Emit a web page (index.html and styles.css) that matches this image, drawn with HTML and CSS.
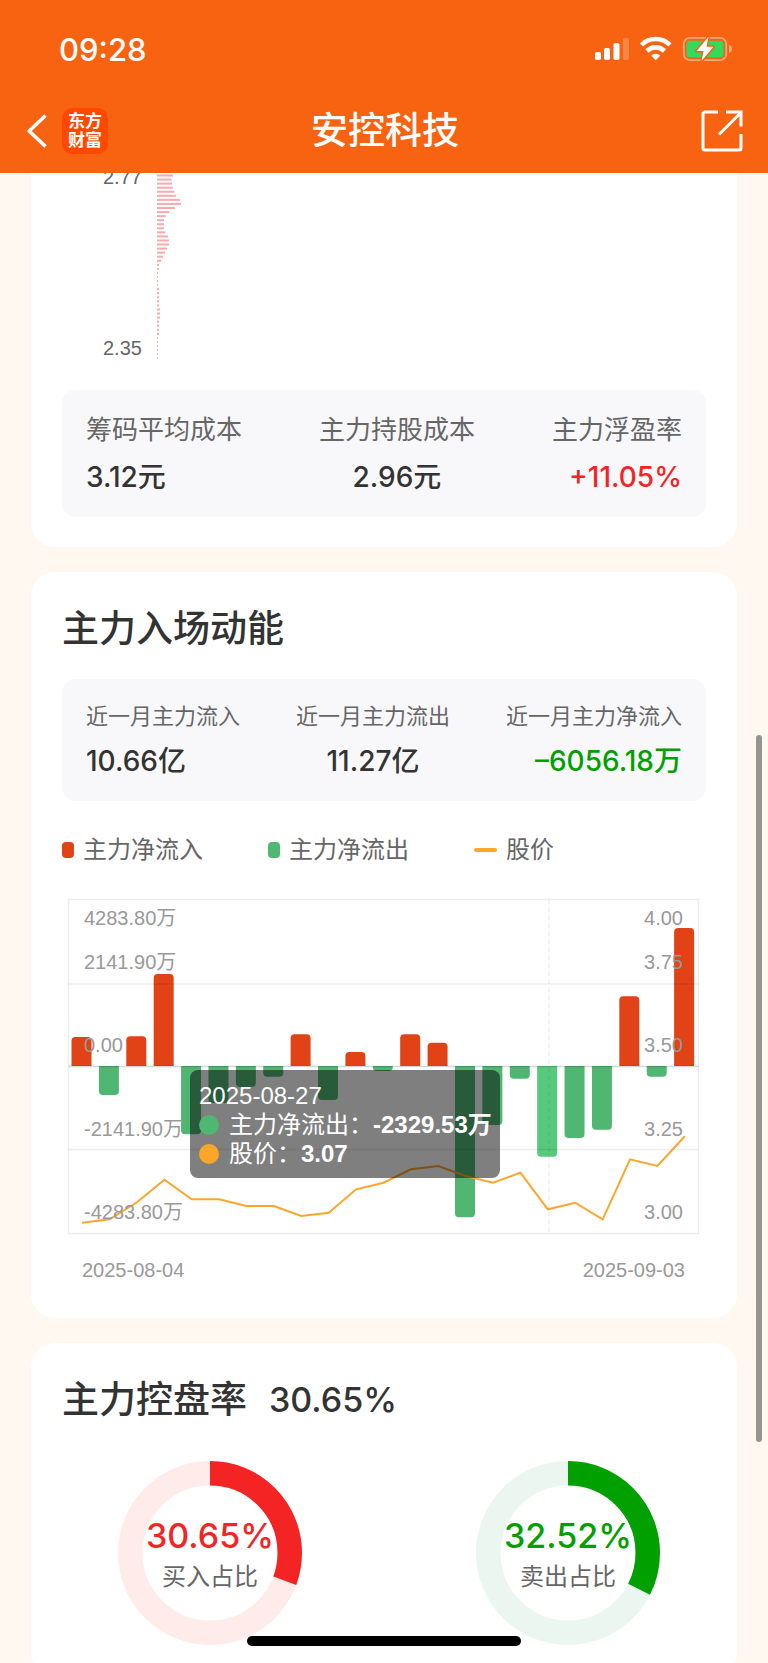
FILE: index.html
```html
<!DOCTYPE html>
<html lang="zh-CN">
<head>
    <meta charset="UTF-8">
    <meta name="viewport" content="width=device-width, initial-scale=1.0">
    <title>安控科技</title>
    <link rel="stylesheet" href="styles.css">
</head>
<body>
    <header class="header">
        <div class="status-bar">
            <span class="time">09:28</span>
            <svg class="status-icons" width="137" height="26" viewBox="0 0 137 26">
                <!-- signal -->
                <g fill="#fff">
                    <rect x="0" y="16" width="6" height="8" rx="1.8"/>
                    <rect x="9" y="12" width="6" height="12" rx="1.8"/>
                    <rect x="18.5" y="7" width="6" height="17" rx="1.8"/>
                    <rect x="28" y="2" width="6" height="22" rx="1.8" opacity="0.22"/>
                </g>
                <!-- wifi -->
                <g fill="none" stroke="#fff" stroke-width="4.6">
                    <path d="M46.4 8.800A20.500 20.500 0 0 1 75 8.800"/>
                    <path d="M51.900 15A12.600 12.600 0 0 1 69.500 15"/>
                </g>
                <path d="M60.700 24.200L56 19.600A6.600 6.600 0 0 1 65.400 19.600Z" fill="#fff"/>
                <!-- battery -->
                <rect x="88.8" y="1.8" width="42.4" height="22.4" rx="6" fill="none" stroke="#fff" stroke-opacity="0.45" stroke-width="1.8"/>
                <path d="M134 9v8c2-.6 3-2.2 3-4s-1-3.4-3-4z" fill="#fff" fill-opacity="0.45"/>
                <rect x="91.5" y="4.8" width="37" height="16.4" rx="3.4" fill="#31dc5b"/>
                <path d="M113.500 0.800L101.600 15H108.600L106.500 25L118.600 10.800H111.600Z" fill="#fff" stroke="#f86311" stroke-width="3" paint-order="stroke" stroke-linejoin="round"/>
            </svg>
        </div>
        <nav class="nav-bar">
            <div class="nav-left">
                <button class="icon-button" aria-label="返回">
                    <svg width="20" height="34" viewBox="0 0 20 34"><path d="M18.500 1.500L2.200 17L18.500 32.500" fill="none" stroke="#fff" stroke-width="3.6" stroke-linejoin="round"/></svg>
                </button>
                <span class="logo">东方<br>财富</span>
            </div>
            <h1 class="nav-title">安控科技</h1>
            <button class="icon-button nav-right" aria-label="分享">
                <svg width="42" height="42" viewBox="0 0 42 42" fill="none" stroke="#fff" stroke-width="3">
                    <path d="M17 2H4Q2 2 2 4V38Q2 40 4 40H38Q40 40 40 38V24"/>
                    <path d="M25 2H40V16.500M39.500 3L18 24.500"/>
                </svg>
            </button>
        </nav>
    </header>

    <main class="content">
        <section class="card card-first">
            <svg class="chip-chart" id="chip-chart" viewBox="0 0 644 217">
                <text x="41" y="11">2.77</text>
                <text x="41" y="182">2.35</text>
            </svg>
            <dl class="stats stats-large">
                <div class="stat"><dt>筹码平均成本</dt><dd>3.12元</dd></div>
                <div class="stat"><dt>主力持股成本</dt><dd>2.96元</dd></div>
                <div class="stat"><dt>主力浮盈率</dt><dd class="up">+11.05%</dd></div>
            </dl>
        </section>

        <section class="card">
            <h2 class="card-title">主力入场动能</h2>
            <dl class="stats">
                <div class="stat"><dt>近一月主力流入</dt><dd>10.66亿</dd></div>
                <div class="stat"><dt>近一月主力流出</dt><dd>11.27亿</dd></div>
                <div class="stat"><dt>近一月主力净流入</dt><dd class="down">–6056.18万</dd></div>
            </dl>
            <ul class="legend">
                <li><i class="mark mark-in"></i>主力净流入</li>
                <li><i class="mark mark-out"></i>主力净流出</li>
                <li><i class="mark mark-line"></i>股价</li>
            </ul>
            <div class="flow">
                <svg class="flow-chart" viewBox="0 0 644 396">
                    <g id="flow-bars"></g>
                    <g class="grid">
                        <rect x="6.5" y="9.5" width="630" height="334"/>
                        <path d="M6.500 94H636.500M6.500 259.500H636.500"/>
                        <path class="zero" d="M6.500 176.500H636.500"/>
                        <path class="pointer" d="M487 10V343"/>
                    </g>
                    <polyline id="price-line"/>
                    <g class="axis">
                        <text x="22" y="35">4283.80万</text>
                        <text x="22" y="79">2141.90万</text>
                        <text x="22" y="162">0.00</text>
                        <text x="22" y="246">-2141.90万</text>
                        <text x="22" y="329">-4283.80万</text>
                        <text x="20" y="387">2025-08-04</text>
                    </g>
                    <g class="axis axis-right">
                        <text x="621" y="35">4.00</text>
                        <text x="621" y="79">3.75</text>
                        <text x="621" y="162">3.50</text>
                        <text x="621" y="246">3.25</text>
                        <text x="621" y="329">3.00</text>
                        <text x="623" y="387">2025-09-03</text>
                    </g>
                </svg>
                <div class="tooltip">
                    <div class="tooltip-row">2025-08-27</div>
                    <div class="tooltip-row"><i class="dot dot-out"></i>主力净流出：<b>-2329.53万</b></div>
                    <div class="tooltip-row"><i class="dot dot-price"></i>股价：<b>3.07</b></div>
                </div>
            </div>
        </section>

        <section class="card">
            <h2 class="card-title">主力控盘率<span class="rate">30.65%</span></h2>
            <div class="donuts">
                <div class="donut donut-buy">
                    <svg viewBox="0 0 184 184">
                        <circle class="track" cx="92" cy="92" r="79.75"/>
                        <circle class="value" cx="92" cy="92" r="79.75" pathLength="100" stroke-dasharray="30.65 100"/>
                    </svg>
                    <div class="donut-text"><strong>30.65%</strong><span>买入占比</span></div>
                </div>
                <div class="donut donut-sell">
                    <svg viewBox="0 0 184 184">
                        <circle class="track" cx="92" cy="92" r="79.75"/>
                        <circle class="value" cx="92" cy="92" r="79.75" pathLength="100" stroke-dasharray="32.52 100"/>
                    </svg>
                    <div class="donut-text"><strong>32.52%</strong><span>卖出占比</span></div>
                </div>
            </div>
        </section>
    </main>

    <div class="scrollbar"></div>
    <div class="home-indicator"></div>

    <script src="script.js"></script>
</body>
</html>
```

FILE: styles.css
```css
* {
    box-sizing: border-box;
    margin: 0;
    padding: 0;
}
body {
    height: 100vh;
    display: flex;
    flex-direction: column;
    overflow: hidden;
    background-color: #fff8f1;
    color: #333;
    font-family: Inter, "Noto Sans CJK SC", sans-serif;
}

/* header */
.header {
    flex: none;
    background-color: #f86311;
    color: #fff;
}
.status-bar {
    height: 88px;
    padding: 10px 36px 0 59px;
    display: flex;
    align-items: center;
    justify-content: space-between;
}
.time {
    font-size: 31px;
    font-weight: 500;
}
.nav-bar {
    height: 85px;
    padding: 0 25px 0 27px;
    display: grid;
    grid-template-columns: 1fr auto 1fr;
    align-items: center;
}
.nav-left {
    display: flex;
    align-items: center;
    gap: 15px;
}
.nav-right {
    justify-self: end;
}
.icon-button {
    display: flex;
    background: none;
    border: none;
    cursor: pointer;
}
.logo {
    width: 46px;
    height: 46px;
    padding-top: 4px;
    border-radius: 10px;
    background-color: #ff4800;
    font-size: 17px;
    font-weight: 700;
    line-height: 19px;
    text-align: center;
}
.nav-title {
    font-size: 37px;
    font-weight: 500;
    line-height: 50px;
}

/* cards */
.content {
    flex: 1;
    min-height: 0;
    padding: 0 31px;
    overflow: hidden;
}
.card {
    margin-bottom: 25px;
    padding: 32px 31px;
    border-radius: 24px;
    background-color: #fff;
}
.card-first {
    padding-top: 0;
    padding-bottom: 30px;
    border-radius: 0 0 24px 24px;
}
.card-title {
    margin-bottom: 25px;
    display: flex;
    align-items: center;
    gap: 22px;
    font-size: 37px;
    font-weight: 500;
    line-height: 50px;
}
.rate {
    font-size: 34px;
}
.chip-chart {
    display: block;
    width: 100%;
    overflow: hidden;
    font-family: "Liberation Sans", Arial, sans-serif;
    font-size: 20px;
    fill: #666;
}
.chip-chart rect {
    fill: #fba9ab;
}

/* stats */
.stats {
    padding: 20px 24px 16px;
    display: flex;
    justify-content: space-between;
    border-radius: 14px;
    background-color: #f8f8fa;
}
.stat {
    text-align: center;
}
.stat:first-child {
    text-align: left;
}
.stat:last-child {
    text-align: right;
}
.stat dt {
    margin-bottom: 4px;
    color: #666;
    font-size: 22px;
    line-height: 34px;
}
.stat dd {
    font-size: 28px;
    line-height: 48px;
    font-weight: 500;
}
.stats-large dt {
    font-size: 26px;
    line-height: 39px;
}
.stat .up {
    color: #f52424;
}
.stat .down {
    color: #00a000;
}

/* legend */
.legend {
    margin: 32px 0 23px;
    display: flex;
    gap: 65px;
    list-style: none;
    color: #666;
    font-size: 24px;
    line-height: 34px;
}
.legend li {
    display: flex;
    align-items: center;
    gap: 9px;
}
.mark {
    width: 12px;
    height: 16px;
    border-radius: 4px;
}
.mark-in {
    background-color: #e14216;
}
.mark-out {
    background-color: #50b772;
}
.mark-line {
    width: 23px;
    height: 4px;
    border-radius: 2px;
    background-color: #fba62b;
}

/* flow chart */
.flow {
    position: relative;
}
.flow-chart {
    display: block;
    width: 100%;
}
.bar-in {
    fill: #e14216;
}
.bar-out {
    fill: #50b772;
}
.bar-active {
    fill: #57c97d;
}
.grid {
    fill: none;
    stroke: rgba(0, 0, 0, 0.07);
    stroke-width: 1.5;
}
.grid .zero {
    stroke: rgba(0, 0, 0, 0.16);
}
.grid .pointer {
    stroke-dasharray: 4 4;
}
#price-line {
    fill: none;
    stroke: #fba62b;
    stroke-width: 2;
}
.axis {
    fill: #999;
    font-family: "Liberation Sans", "Noto Sans CJK SC", sans-serif;
    font-size: 20px;
}
.axis-right {
    text-anchor: end;
}
.tooltip {
    position: absolute;
    left: 128px;
    top: 180px;
    padding: 11px 8px 10px 9px;
    border-radius: 8px;
    background-color: rgba(0, 0, 0, 0.5);
    color: #fff;
    font-family: "Liberation Sans", "Noto Sans CJK SC", sans-serif;
    font-size: 24px;
    white-space: nowrap;
}
.tooltip-row {
    height: 29px;
    display: flex;
    align-items: center;
    line-height: 29px;
}
.tooltip b {
    font-weight: 700;
}
.dot {
    width: 20px;
    height: 20px;
    margin-right: 10px;
    border-radius: 50%;
}
.dot-out {
    background-color: #50b772;
}
.dot-price {
    background-color: #fba62b;
}

/* donuts */
.donuts {
    padding: 6px 46px 0 56px;
    margin-top: 30px;
    display: flex;
    justify-content: space-between;
}
.donut {
    position: relative;
    width: 184px;
    height: 184px;
}
.donut svg {
    display: block;
    transform: rotate(-90deg);
}
.donut circle {
    fill: none;
    stroke-width: 24.5;
}
.donut-text {
    position: absolute;
    inset: 0;
    display: flex;
    flex-direction: column;
    align-items: center;
    justify-content: center;
}
.donut-text strong {
    font-size: 34px;
    font-weight: 500;
    line-height: 48px;
}
.donut-text span {
    color: #666;
    font-size: 24px;
    line-height: 34px;
}
.donut-buy {
    color: #f52424;
}
.donut-sell {
    color: #00a000;
}
.donut .value {
    stroke: currentColor;
}
.donut-buy .track {
    stroke: #feebea;
}
.donut-sell .track {
    stroke: #eaf6ef;
}

/* system overlays */
.scrollbar {
    position: fixed;
    top: 735px;
    right: 6px;
    width: 6px;
    height: 707px;
    border-radius: 3px;
    background-color: #97948f;
}
.home-indicator {
    position: fixed;
    left: 50%;
    bottom: 17px;
    width: 274px;
    height: 10px;
    border-radius: 5px;
    background-color: #000;
    transform: translateX(-50%);
}
```

FILE: script.js
```js
const SVG_NS = 'http://www.w3.org/2000/svg';

// width of each chip row, high price to low
const chips = [16, 14.5, 15, 15.7, 17.3, 19, 23, 24, 18, 12.3, 8.7, 7, 7, 7, 8.3, 11, 12, 12, 10, 8, 6, 4,
    2, 2, 1, 1, 1, 1, 2, 2, 2, 2, 2, 3, 3, 3, 2, 2, 2, 2, 1, 1, 1, 1, 1, 1];

// daily net flow, positive goes up
const flows = [29, -29, 29.7, 92, -68.3, -37, -21, -10.7, 31.7, -34, 14, -5, 31.7, 23.3, -151.3, -59,
    -12.7, -90.7, -72, -63.7, 69.7, -10.7, 138];

const prices = [332.7, 329.3, 312.3, 289.7, 309.3, 309.3, 316, 316, 326, 322.7, 299.3, 292.7,
    279.3, 276, 286, 292.7, 282.7, 319.3, 312.7, 329.3, 269.3, 276, 246.3];

const activeIndex = 17;
const step = 630 / flows.length;
const zeroY = 176;

function add(parent, tag, attrs) {
    const el = document.createElementNS(SVG_NS, tag);
    Object.keys(attrs).forEach((key) => el.setAttribute(key, attrs[key]));
    parent.appendChild(el);
}

function drawChips() {
    const chart = document.getElementById('chip-chart');
    chips.forEach((width, i) => {
        add(chart, 'rect', { x: 95, y: 1.5 + i * 4.06, width: width, height: 2 });
    });
}

function drawBars() {
    const group = document.getElementById('flow-bars');
    flows.forEach((value, i) => {
        const left = 6 + step * i + 3.5;
        const dir = value > 0 ? -1 : 1;
        const end = zeroY - value;
        const r = 4 * dir;
        const d = `M${left} ${zeroY}V${end - r}q0 ${r} 4 ${r}h12q4 0 4 ${-r}V${zeroY}z`;
        let name = value > 0 ? 'bar-in' : 'bar-out';
        if (i === activeIndex) name = 'bar-active';
        add(group, 'path', { d: d, class: name });
    });
}

function drawPrice() {
    const points = prices.map((y, i) => `${6.5 + step * (i + 0.5)},${y}`);
    document.getElementById('price-line').setAttribute('points', points.join(' '));
}

drawChips();
drawBars();
drawPrice();
```
